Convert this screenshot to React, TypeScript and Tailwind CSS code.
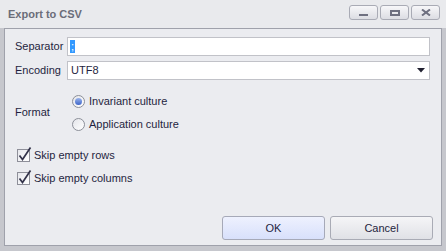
import React from "react";

const font = { fontFamily: '"Liberation Sans", Arial, sans-serif' };

function TitleBtn({ children }: { children: React.ReactNode }) {
  return (
    <div className="w-[29px] h-[15px] rounded-[3px] border border-[#a9abb5] bg-gradient-to-b from-[#f7f7f9] to-[#dcdde3] flex items-center justify-center">
      {children}
    </div>
  );
}

function Radio({ checked }: { checked?: boolean }) {
  return (
    <div className="w-[13px] h-[13px] rounded-full border border-[#8c8f99] bg-gradient-to-br from-[#e4e5ea] to-[#ffffff] flex items-center justify-center">
      {checked && <div className="w-[7px] h-[7px] rounded-full bg-gradient-to-b from-[#9bb3ea] to-[#3e64c8]" />}
    </div>
  );
}

function Check() {
  return (
    <div className="relative w-[13px] h-[13px] border border-[#8e8f99] bg-gradient-to-br from-[#e6e7ec] to-white">
      <svg className="absolute left-[0px] top-[-4px]" width="14" height="16" viewBox="0 0 14 16">
        <path d="M1.5 9.5 L4.5 13.5 L12.5 1.5" stroke="#33334a" strokeWidth="1.7" fill="none" />
      </svg>
    </div>
  );
}

export default function App() {
  return (
    <div className="w-[446px] h-[251px] bg-[#c6c7cd] px-[4px] flex flex-col text-[11px]" style={font}>
      <div className="h-[28px] -mx-[4px] pl-[8px] pr-[6px] flex items-center bg-[#e9eaed] shrink-0">
        <span className="font-bold text-[11px] text-[#6b6d79] flex-1">Export to CSV</span>
        <div className="flex gap-[2px] self-start mt-[5px]">
          <TitleBtn>
            <div className="w-[9px] h-[2px] bg-[#6e7080] mt-[5px]" />
          </TitleBtn>
          <TitleBtn>
            <div className="w-[10px] h-[6px] border-2 border-[#6e7080]" />
          </TitleBtn>
          <TitleBtn>
            <svg width="10" height="7" viewBox="0 0 10 7">
              <path d="M1 0.5 L9 6.5 M9 0.5 L1 6.5" stroke="#6e7080" strokeWidth="2" />
            </svg>
          </TitleBtn>
        </div>
      </div>
      <div className="flex-1 bg-[#ebecf0] border border-[#9fa1ab] mb-[5px] flex flex-col text-[#1f1f40] pl-[10px] pr-[11px] pt-[8px]">
        <div className="flex items-center h-[19px]">
          <span className="w-[52px]">Separator</span>
          <div className="flex-1 h-[19px] bg-white border border-[#c1c2c8] flex items-center px-[2px]">
            <span className="bg-[#3399ff] text-white leading-[13px] px-[1px]">;</span>
          </div>
        </div>
        <div className="flex items-center h-[19px] mt-[5px]">
          <span className="w-[52px]">Encoding</span>
          <div className="flex-1 h-[19px] bg-white border border-[#c1c2c8] flex items-center px-[3px]">
            <span className="flex-1">UTF8</span>
            <svg width="8" height="5" viewBox="0 0 8 5" className="mr-[1px]">
              <path d="M0 0 H8 L4 4.5 Z" fill="#202030" />
            </svg>
          </div>
        </div>
        <div className="flex items-center mt-[14px]">
          <span className="w-[52px]">Format</span>
          <div className="flex flex-col gap-[9px] pl-[5px]">
            <div className="flex items-center gap-[4px] h-[14px]">
              <Radio checked />
              <span>Invariant culture</span>
            </div>
            <div className="flex items-center gap-[4px] h-[14px]">
              <Radio />
              <span>Application culture</span>
            </div>
          </div>
        </div>
        <div className="flex flex-col gap-[9px] mt-[17px] pl-[2px]">
          <div className="flex items-center gap-[4px] h-[14px]">
            <Check />
            <span>Skip empty rows</span>
          </div>
          <div className="flex items-center gap-[4px] h-[14px]">
            <Check />
            <span>Skip empty columns</span>
          </div>
        </div>
        <div className="flex-1" />
        <div className="flex justify-end gap-[5px] mb-[5px] -mr-[3px]">
          <button className="w-[103px] h-[24px] rounded-[3px] border border-[#a6a9b8] bg-gradient-to-b from-[#eef1fe] to-[#d8e0fb] text-[#1f1f40]">
            OK
          </button>
          <button className="w-[103px] h-[24px] rounded-[3px] border border-[#a9abb5] bg-gradient-to-b from-[#f5f5f7] to-[#e0e1e6] text-[#1f1f40]">
            Cancel
          </button>
        </div>
      </div>
    </div>
  );
}
